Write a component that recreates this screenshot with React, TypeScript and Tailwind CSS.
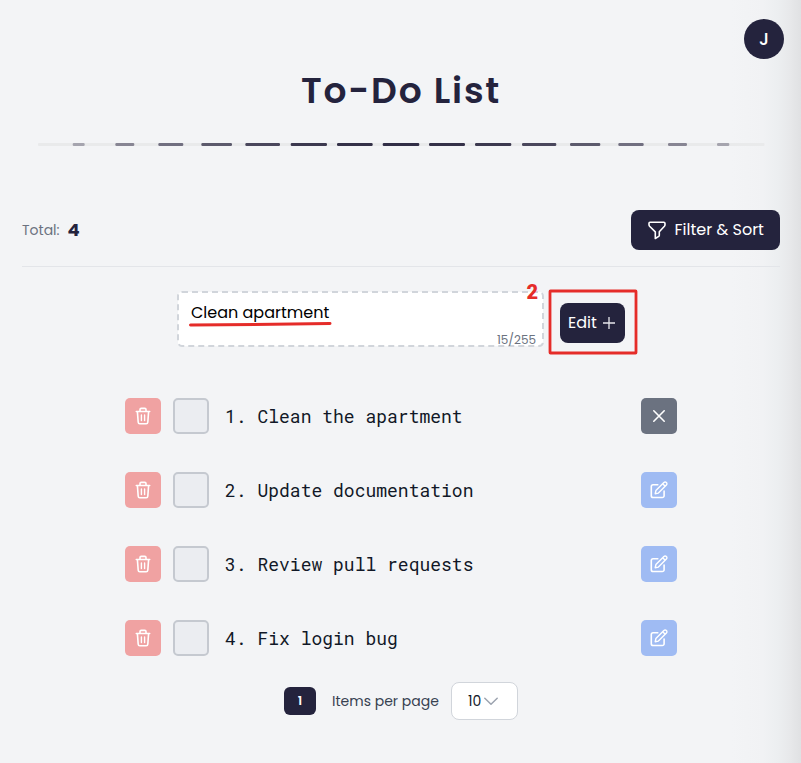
import React from "react";

const sans = "font-['Poppins','Inter',sans-serif]";

const dashes: [number, number, string][] = [
  [72.7, 84.7, "#a5a4ae"],
  [115.3, 134.3, "#878593"],
  [158.3, 183.3, "#716f80"],
  [201.3, 232, "#5c5a6c"],
  [245.3, 280, "#4a475c"],
  [290.7, 327, "#3c394f"],
  [337, 372.7, "#343148"],
  [382.7, 419.3, "#312e46"],
  [429, 465, "#343148"],
  [475, 511.3, "#3c394f"],
  [522, 556.3, "#4a475c"],
  [570, 600.3, "#5c5a6c"],
  [618.3, 643.7, "#716f80"],
  [668, 687, "#878593"],
  [717, 729.3, "#a5a4ae"],
];

const tasks = ["Clean the apartment", "Update documentation", "Review pull requests", "Fix login bug"];

function DashedDivider() {
  return (
    <svg className="relative block h-[6px] w-full shrink-0" viewBox="0 0 801 6">
      <rect x="38" y="1" width="726.5" height="3" rx="1" fill="#e9eaeb" />
      {dashes.map(([a, b, color]) => (
        <rect key={a} x={a} y="1" width={b - a} height="3" rx="1.2" fill={color} />
      ))}
    </svg>
  );
}

function TrashIcon() {
  return (
    <svg className="size-5" viewBox="0 0 20 20" fill="none" stroke="white" strokeWidth="1.6" strokeLinecap="round" strokeLinejoin="round">
      <path d="M3.3 5.5h13.4M7 5.3V3.6a1.2 1.2 0 0 1 1.2-1.2h3.6A1.2 1.2 0 0 1 13 3.6v1.7M4.4 5.8l.8 10.5a1.6 1.6 0 0 0 1.6 1.5h6.4a1.6 1.6 0 0 0 1.6-1.5l.8-10.5" />
      <path strokeWidth="1.4" d="M8.4 8.9v5.6M11.6 8.9v5.6" />
    </svg>
  );
}

function EditIcon() {
  return (
    <svg className="size-5" viewBox="0 0 20 20" fill="none" stroke="white" strokeWidth="1.6" strokeLinecap="round" strokeLinejoin="round">
      <path d="M8.8 4.7H4.1a1.8 1.8 0 0 0-1.8 1.8v9.2a1.8 1.8 0 0 0 1.8 1.8h9.2a1.8 1.8 0 0 0 1.8-1.8V11" />
      <path strokeWidth="1.4" d="M6.2 13.7l.7-3.1 8-8a1.7 1.7 0 0 1 2.5 2.5l-8 8-3.2.6ZM13.7 3.8l2.5 2.5" />
    </svg>
  );
}

function Task({ text, index }: { text: string; index: number }) {
  return (
    <li className="flex h-9 items-center">
      <button className="flex size-9 items-center justify-center rounded-[5px] bg-[#f0a2a2]">
        <TrashIcon />
      </button>
      <span className="ml-3 size-9 rounded-[5px] border-2 border-[#c5c9d0] bg-[#ebedf1]" />
      <span className="ml-4 flex-1 whitespace-pre font-['Roboto_Mono','DejaVu_Sans_Mono',monospace] text-[18px] leading-9 text-[#111827]">
        {index + 1}. {text}
      </span>
      {index === 0 ? (
        <button className="flex size-9 items-center justify-center rounded-[5px] bg-[#6b7280]">
          <svg className="size-5" viewBox="0 0 20 20" fill="none" stroke="white" strokeWidth="1.6" strokeLinecap="round">
            <path d="M4.8 4.8l10.4 10.4M15.2 4.8L4.8 15.2" />
          </svg>
        </button>
      ) : (
        <button className="flex size-9 items-center justify-center rounded-[5px] bg-[#9fbbf3]">
          <EditIcon />
        </button>
      )}
    </li>
  );
}

export default function App() {
  return (
    <main className={`relative flex h-[763px] w-[801px] flex-col overflow-hidden bg-[#f3f4f6] ${sans}`}>
      <div className="pointer-events-none absolute inset-y-0 right-0 w-[70px] bg-[linear-gradient(to_right,#f3f4f6_0%,#f1f2f4_45%,#eceef0_68%,#e7e8ea_85%,#e0e1e3_100%)]" />

      <header className="relative flex h-[142px] shrink-0 justify-center pt-[67px]">
        <h1 className="ml-px h-12 whitespace-nowrap text-[36px] font-semibold leading-[48px] tracking-[1.8px] text-[#24233d]">To-Do List</h1>
        <div className="absolute right-[17px] top-[19px] flex size-10 items-center justify-center rounded-full bg-[#24233d] pb-px text-[18px] font-medium text-white">J</div>
      </header>
      <DashedDivider />

      <section className="relative ml-[22px] mr-[21px] mt-[62px] flex h-[57px] shrink-0 items-start justify-between border-b border-[#e3e5e9]">
        <div className="flex h-10 items-center">
          <span className="text-[14px] text-[#6b7280]">Total:</span>
          <span className="ml-2 h-7 text-[18px] font-bold leading-7 text-[#24233d]">4</span>
        </div>
        <button className="flex h-10 w-[149px] items-center rounded-lg bg-[#24233d] pl-4 text-[16px] text-white">
          <svg className="size-5" viewBox="0 0 20 20" fill="none" stroke="white" strokeWidth="1.6" strokeLinejoin="round">
            <path d="M3 2.2h13.8q1.2 0 1.2 1.2v1.4q0 .8-.6 1.5l-5.1 5.5v3.4q0 .8-.6 1.2l-3.4 2.1v-6.6L2.6 6.2Q2 5.5 2 4.7V3.2q0-1 1-1Z" />
          </svg>
          <span className="ml-[7.5px] whitespace-nowrap">Filter &amp; Sort</span>
        </button>
      </section>

      <section className="relative ml-[177px] mt-6 flex h-14 w-[448px] shrink-0 items-start">
        <div className="relative h-14 w-[367px] bg-white px-[14px]">
          <svg className="absolute inset-0 h-14 w-[367px]" viewBox="0 0 367 56" fill="none">
            <rect width="367" height="56" fill="#f3f4f6" />
            <rect x="1" y="1" width="365" height="54" rx="4" fill="white" stroke="#d1d5db" strokeWidth="2" strokeDasharray="6 4" />
          </svg>
          <span className="relative block whitespace-nowrap pt-[10px] text-[16px] leading-6 text-black">Clean apartment</span>
          <span className="absolute -bottom-px right-2 text-[12px] leading-4 text-[#6b7280]">15/255</span>
        </div>
        <button className="ml-4 mt-3 flex h-10 w-[65px] items-center rounded-lg bg-[#24233d] pl-2 text-[16px] text-white">
          <span>Edit</span>
          <svg className="ml-1 size-4" viewBox="0 0 16 16" fill="none" stroke="#e6e6ec" strokeWidth="1.3">
            <path d="M8 2v12M2 8h12" />
          </svg>
        </button>
        <svg className="pointer-events-none absolute left-[11px] top-[29px] h-[8px] w-[146px]" viewBox="0 0 146 8" fill="none">
          <path d="M2.5 5.1Q70 4.6 142 3.6" stroke="#e52c29" strokeWidth="3" strokeLinecap="round" />
        </svg>
        <span className="absolute left-[349.5px] top-[-11px] font-['Roboto',sans-serif] text-[20px] font-black leading-6 text-[#e52c29]">2</span>
        <svg className="pointer-events-none absolute left-[371px] top-[-2px] h-[66px] w-[91px]" viewBox="0 0 91 66" fill="none">
          <rect x="2" y="2" width="86" height="62" rx="0.5" stroke="#e52c29" strokeWidth="2.8" />
        </svg>
      </section>

      <ul className="relative ml-[125px] mt-[51px] flex w-[552px] flex-col gap-[38px]">
        {tasks.map((text, i) => (
          <Task key={text} text={text} index={i} />
        ))}
      </ul>

      <footer className="ml-[284px] mt-[26px] flex h-[38px] items-center">
        <span className="flex h-7 w-8 items-center justify-center rounded-md bg-[#24233d] text-[12px] font-semibold text-white">1</span>
        <span className="ml-4 w-[107px] whitespace-nowrap text-[14px] text-[#374151]">Items per page</span>
        <button className="ml-3 flex h-[38px] w-[67px] items-center rounded-lg border border-[#d1d5db] bg-white pl-4 text-[14px] text-[#111827]">
          <span>10</span>
          <svg className="ml-0.5 h-4 w-4" viewBox="0 0 16 16" fill="none" stroke="#9ca3af" strokeWidth="1.5" strokeLinecap="round" strokeLinejoin="round">
            <path d="M1.8 5.2L8 11.2l6.2-6" />
          </svg>
        </button>
      </footer>
    </main>
  );
}
